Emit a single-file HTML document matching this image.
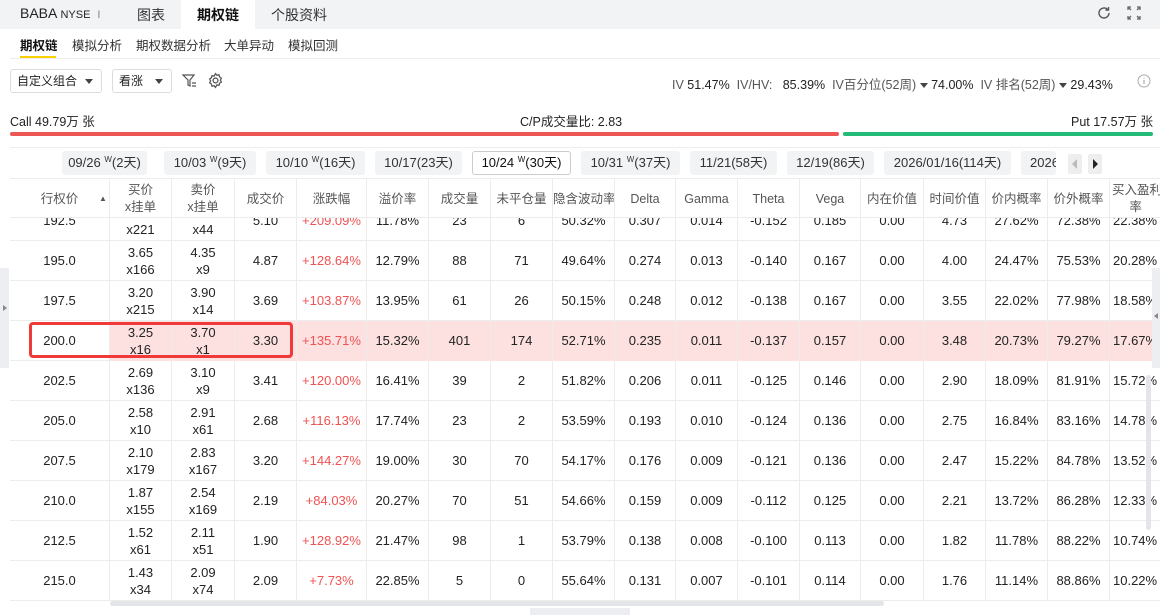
<!DOCTYPE html>
<html><head><meta charset="utf-8">
<style>
*{margin:0;padding:0;box-sizing:border-box}
body{width:1160px;height:615px;overflow:hidden;background:#fff;font-family:"Liberation Sans","Noto Sans CJK SC",sans-serif;color:#222;font-size:13px;position:relative}
.abs{position:absolute}
.top{left:0;top:0;width:1160px;height:29px;background:#f2f3f5}
.top span{position:absolute;top:5px;font-size:14px;color:#333}
.sub span{position:absolute;top:35px;font-size:12.5px;color:#333}
.sel{border:1px solid #ddd;border-radius:3px;height:24px;top:69px;font-size:12px;line-height:22px;padding:0 6px;color:#222;white-space:nowrap}
.tri{display:inline-block;width:0;height:0;border-left:4px solid transparent;border-right:4px solid transparent;border-top:5px solid #444;vertical-align:middle}
.sel .tri{position:absolute;right:8px;top:9px}
.dt{top:151px;height:24px;background:#f2f3f5;border-radius:3px;font-size:13px;color:#333;text-align:center;line-height:24px;white-space:nowrap;overflow:hidden}
.dt i{font-style:normal;font-size:8px;position:relative;top:-5px;line-height:0}
.row{position:absolute;left:10px;height:40px;width:1160px;border-bottom:1px solid #ececec}
.c{position:absolute;top:0;height:40px;border-right:1px solid #ececec;text-align:center;font-size:13px;white-space:nowrap;overflow:hidden}
.c1{line-height:40px}
.c2{padding-top:3px;line-height:17px}
.r{color:#f05252}
.hdr{position:absolute;left:10px;top:178px;height:40px;width:1160px;background:#fff;border-top:1px solid #ececec;border-bottom:1px solid #ececec;z-index:5}
.hdr .c{color:#555;font-size:12.5px}
</style></head><body>
<div class="abs top">
<span style="left:20px;color:#222">BABA <small style="font-size:11px">NYSE</small> <span style="position:static;color:#888;font-size:11px">&nbsp;I</span></span>
<span style="left:137px">图表</span>
<div class="abs" style="left:181px;top:0;width:74px;height:29px;background:#fff"></div>
<span style="left:197px;font-weight:bold;color:#111">期权链</span>
<span style="left:271px">个股资料</span>
<svg class="abs" style="left:1096px;top:5px" width="16" height="16" viewBox="0 0 16 16"><path d="M13 8a5 5 0 1 1-1.5-3.6" fill="none" stroke="#555" stroke-width="1.4"/><path d="M12.5 2v3h-3" fill="none" stroke="#555" stroke-width="1.4"/></svg>
<svg class="abs" style="left:1126px;top:5px" width="16" height="16" viewBox="0 0 16 16" fill="none" stroke="#666" stroke-width="1.3"><path d="M2 5V2h3M11 2h3v3M14 11v3h-3M5 14H2v-3M2 2l3 3M14 2l-3 3M14 14l-3-3M2 14l3-3"/></svg>
</div>
<div class="sub">
<span style="left:20px;font-weight:bold;color:#111">期权链</span>
<span style="left:72px">模拟分析</span>
<span style="left:136px">期权数据分析</span>
<span style="left:224px">大单异动</span>
<span style="left:288px">模拟回测</span>
</div>
<div class="abs" style="left:20px;top:56px;width:36px;height:2px;background:#f7d200"></div>
<div class="abs" style="left:10px;top:58px;width:1150px;height:1px;background:#eee"></div>
<div class="abs sel" style="left:10px;width:92px">自定义组合<span class="tri"></span></div>
<div class="abs sel" style="left:112px;width:60px">看涨<span class="tri"></span></div>
<svg class="abs" style="left:182px;top:73px" width="16" height="16" viewBox="0 0 16 16" fill="none" stroke="#555" stroke-width="1.2"><path d="M1 2h11L8 7v6l-2-1V7z"/><path d="M10 10h4M10 13h4"/></svg>
<svg class="abs" style="left:207px;top:72px" width="17" height="17" viewBox="0 0 16 16" fill="none" stroke="#555" stroke-width="1.2"><circle cx="8" cy="8" r="2.3"/><path d="M8 1.5l1.3 1.6 2-.5.5 2 1.7 1.2-.9 1.8.9 1.8-1.7 1.2-.5 2-2-.5L8 14.5l-1.3-1.6-2 .5-.5-2-1.7-1.2.9-1.8-.9-1.8 1.7-1.2.5-2 2 .5z"/></svg>
<div class="abs" style="left:672px;top:74px;font-size:12.5px;color:#555;white-space:nowrap">IV <span style="color:#222">51.47%</span> &nbsp;IV/HV: &nbsp;&nbsp;<span style="color:#222">85.39%</span> &nbsp;IV百分位(52周) <span class="tri"></span> <span style="color:#222">74.00%</span> &nbsp;IV 排名(52周) <span class="tri"></span> <span style="color:#222">29.43%</span></div>
<svg class="abs" style="left:1137px;top:74px" width="14" height="14" viewBox="0 0 14 14"><circle cx="7" cy="7" r="6" fill="none" stroke="#aaa"/><path d="M7 6v4M7 4v.8" stroke="#aaa" stroke-width="1.2"/></svg>
<div class="abs" style="left:10px;top:111px;font-size:12.5px">Call 49.79万 张</div>
<div class="abs" style="left:520px;top:111px;font-size:12.5px">C/P成交量比: 2.83</div>
<div class="abs" style="left:1071px;top:111px;font-size:12.5px">Put 17.57万 张</div>
<div class="abs" style="left:10px;top:132px;width:829px;height:4px;background:#ee5555;border-radius:2px"></div>
<div class="abs" style="left:843px;top:132px;width:310px;height:4px;background:#22bb77;border-radius:2px"></div>
<div class="abs" style="left:10px;top:147px;width:1150px;height:1px;background:#eee"></div>
<div class="abs dt" style="left:62px;width:85px">09/26 <i>W</i>(2天)</div>
<div class="abs dt" style="left:164px;width:92px">10/03 <i>W</i>(9天)</div>
<div class="abs dt" style="left:266px;width:99px">10/10 <i>W</i>(16天)</div>
<div class="abs dt" style="left:375px;width:87px">10/17(23天)</div>
<div class="abs dt" style="left:472px;width:99px;background:#fff;border:1px solid #ccc;color:#111;line-height:22px">10/24 <i>W</i>(30天)</div>
<div class="abs dt" style="left:581px;width:99px">10/31 <i>W</i>(37天)</div>
<div class="abs dt" style="left:690px;width:87px">11/21(58天)</div>
<div class="abs dt" style="left:787px;width:87px">12/19(86天)</div>
<div class="abs dt" style="left:884px;width:127px">2026/01/16(114天)</div>
<div class="abs dt" style="left:1021px;width:35px;text-align:left;padding-left:9px">2026</div>
<div class="abs" style="left:1068px;top:154px;width:14px;height:20px;background:#eee;border-radius:2px"><div style="margin:5px 0 0 4px;width:0;height:0;border-top:5px solid transparent;border-bottom:5px solid transparent;border-right:5px solid #bbb"></div></div>
<div class="abs" style="left:1088px;top:154px;width:14px;height:20px;background:#eee;border-radius:2px"><div style="margin:5px 0 0 5px;width:0;height:0;border-top:5px solid transparent;border-bottom:5px solid transparent;border-left:5px solid #222"></div></div>

<div class="hdr">
<div class="c c1" style="left:0;width:100px">行权价 <span style="font-size:8px;color:#555;position:absolute;left:89px;top:0;line-height:40px">▲</span></div>
<div class="c c2" style="left:100px;width:62px">买价<br>x挂单</div>
<div class="c c2" style="left:162px;width:63px">卖价<br>x挂单</div>
<div class="c c1" style="left:225px;width:62px">成交价</div>
<div class="c c1" style="left:287px;width:70px">涨跌幅</div>
<div class="c c1" style="left:357px;width:62px">溢价率</div>
<div class="c c1" style="left:419px;width:62px">成交量</div>
<div class="c c1" style="left:481px;width:62px">未平仓量</div>
<div class="c c1" style="left:543px;width:62px">隐含波动率</div>
<div class="c c1" style="left:605px;width:61px">Delta</div>
<div class="c c1" style="left:666px;width:62px">Gamma</div>
<div class="c c1" style="left:728px;width:62px">Theta</div>
<div class="c c1" style="left:790px;width:61px">Vega</div>
<div class="c c1" style="left:851px;width:63px">内在价值</div>
<div class="c c1" style="left:914px;width:62px">时间价值</div>
<div class="c c1" style="left:976px;width:62px">价内概率</div>
<div class="c c1" style="left:1038px;width:62px">价外概率</div>
<div class="c c2" style="left:1100px;width:60px;text-align:left;padding-left:2px">买入盈利<br>&nbsp;&nbsp;&nbsp;&nbsp;&nbsp;率</div>
</div>

<div id="rows"></div>
<script>
var d=[
["192.5","","x221","","x44","5.10","+209.09%","11.78%","23","6","50.32%","0.307","0.014","-0.152","0.185","0.00","4.73","27.62%","72.38%","22.38%"],
["195.0","3.65","x166","4.35","x9","4.87","+128.64%","12.79%","88","71","49.64%","0.274","0.013","-0.140","0.167","0.00","4.00","24.47%","75.53%","20.28%"],
["197.5","3.20","x215","3.90","x14","3.69","+103.87%","13.95%","61","26","50.15%","0.248","0.012","-0.138","0.167","0.00","3.55","22.02%","77.98%","18.58%"],
["200.0","3.25","x16","3.70","x1","3.30","+135.71%","15.32%","401","174","52.71%","0.235","0.011","-0.137","0.157","0.00","3.48","20.73%","79.27%","17.67%"],
["202.5","2.69","x136","3.10","x9","3.41","+120.00%","16.41%","39","2","51.82%","0.206","0.011","-0.125","0.146","0.00","2.90","18.09%","81.91%","15.72%"],
["205.0","2.58","x10","2.91","x61","2.68","+116.13%","17.74%","23","2","53.59%","0.193","0.010","-0.124","0.136","0.00","2.75","16.84%","83.16%","14.78%"],
["207.5","2.10","x179","2.83","x167","3.20","+144.27%","19.00%","30","70","54.17%","0.176","0.009","-0.121","0.136","0.00","2.47","15.22%","84.78%","13.52%"],
["210.0","1.87","x155","2.54","x169","2.19","+84.03%","20.27%","70","51","54.66%","0.159","0.009","-0.112","0.125","0.00","2.21","13.72%","86.28%","12.33%"],
["212.5","1.52","x61","2.11","x51","1.90","+128.92%","21.47%","98","1","53.79%","0.138","0.008","-0.100","0.113","0.00","1.82","11.78%","88.22%","10.74%"],
["215.0","1.43","x34","2.09","x74","2.09","+7.73%","22.85%","5","0","55.64%","0.131","0.007","-0.101","0.114","0.00","1.76","11.14%","88.86%","10.22%"]];
var L=[0,100,162,225,287,357,419,481,543,605,666,728,790,851,914,976,1038,1100,1160];
var h="";
d.forEach(function(r,i){
 var top=201+i*40,hl=i==3;
 h+='<div class="row" style="top:'+top+'px">';
 for(var k=0;k<18;k++){
  var w=L[k+1]-L[k],bg=(hl&&k>0)?'background:#fde0e0;':'';
  var s='left:'+L[k]+'px;width:'+w+'px;'+bg;
  if(k==1||k==2){h+='<div class="c c2" style="'+s+'">'+r[k*2-1]+'<br>'+r[k*2]+'</div>';}
  else{var v=r[k<1?0:k+2];h+='<div class="c c1'+(k==4?' r':'')+'" style="'+s+(k==17?'text-align:left;padding-left:3px;':'')+'">'+v+'</div>';}
 }
 h+='</div>';
});
document.getElementById('rows').innerHTML=h;
</script>
<div class="abs" style="left:29px;top:322px;width:264px;height:36px;border:3px solid #f03a3a;border-radius:4px;z-index:6"></div>
<div class="abs" style="left:0;top:268px;width:9px;height:100px;background:#eceef1;z-index:7"><div style="margin:37px 0 0 3px;width:0;height:0;border-top:3px solid transparent;border-bottom:3px solid transparent;border-left:4px solid #888"></div></div>
<div class="abs" style="left:1152px;top:268px;width:8px;height:100px;background:#eceef1;z-index:7"><div style="margin:45px 0 0 2px;width:0;height:0;border-top:3px solid transparent;border-bottom:3px solid transparent;border-right:4px solid #888"></div></div>
<div class="abs" style="left:1146px;top:375px;width:5px;height:155px;background:#e3e5e8;border-radius:3px;z-index:7"></div>
<div class="abs" style="left:10px;top:601px;width:1150px;height:14px;background:#fff;z-index:7"></div>
<div class="abs" style="left:110px;top:601px;width:774px;height:5px;background:#e3e5e8;border-radius:3px;z-index:8"></div>
<div class="abs" style="left:530px;top:608px;width:100px;height:7px;background:#eceef1;z-index:8"></div>
</body></html>
